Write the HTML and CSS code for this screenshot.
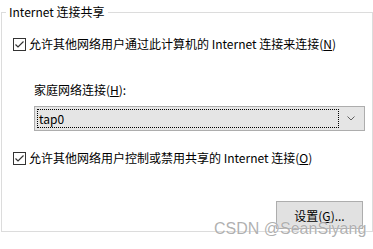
FILE: index.html
```html
<!DOCTYPE html>
<html lang="zh-CN">
<head>
  <meta charset="UTF-8">
  <title>Internet 连接共享</title>
  <link rel="stylesheet" href="styles.css">
</head>
<body>
  <fieldset class="group">
    <legend>Internet 连接共享</legend>

    <label class="check check-first">
      <span class="box">
        <svg width="11" height="11" viewBox="0 0 11 11"><path d="M1.5 5.5 L4 8 L9.5 2.5" fill="none" stroke="#333" stroke-width="1.2"/></svg>
      </span>
      <span>允许其他网络用户通过此计算机的 Internet 连接来连接(<u>N</u>)</span>
    </label>

    <div class="field">
      <div class="field-label">家庭网络连接(<u>H</u>):</div>
      <div class="combo">
        <span class="combo-value">tap0</span>
        <svg class="arrow" width="8" height="5" viewBox="0 0 8 5"><path d="M0.5 0.5 L4 4 L7.5 0.5" fill="none" stroke="#606060" stroke-width="1"/></svg>
      </div>
    </div>

    <label class="check check-second">
      <span class="box">
        <svg width="11" height="11" viewBox="0 0 11 11"><path d="M1.5 5.5 L4 8 L9.5 2.5" fill="none" stroke="#333" stroke-width="1.2"/></svg>
      </span>
      <span>允许其他网络用户控制或禁用共享的 Internet 连接(<u>O</u>)</span>
    </label>

    <div class="actions">
      <button class="btn">设置(<u>G</u>)...</button>
    </div>
  </fieldset>

  <div class="watermark">CSDN @SeanSiyang</div>
</body>
</html>
```

FILE: styles.css
```css
body {
  margin: 0;
  background: #fff;
  font-family: "Noto Sans CJK SC", sans-serif;
  font-size: 12px;
  color: #000;
  position: relative;
  width: 373px;
  height: 249px;
  overflow: hidden;
}
.group {
  margin: 4px 0 1px 1px;
  padding: 0;
  border: 1px solid #dcdcdc;
  height: 226px;
}
.group legend {
  margin-left: 4px;
  padding: 0 3px;
  line-height: 16px;
}
.check {
  display: flex;
  align-items: center;
  margin-left: 11px;
  line-height: 16px;
}
.check-first {
  margin-top: 16px;
}
.check-second {
  margin-top: 19px;
}
.box {
  width: 11px;
  height: 11px;
  border: 1px solid #333;
  margin-right: 3px;
  display: flex;
}
.field {
  margin-left: 32px;
  margin-top: 30px;
  width: 331px;
}
.field-label {
  line-height: 16px;
}
.combo {
  margin-top: 8px;
  height: 23px;
  border: 1px solid #adadad;
  background: #e5e5e5;
  display: flex;
  align-items: center;
  padding: 2px;
  box-sizing: border-box;
  height: 25px;
}
.combo-value {
  flex: 1;
  height: 19px;
  line-height: 17px;
  border: 1px dotted #000;
  box-sizing: border-box;
  padding-left: 1px;
}
.arrow {
  margin: 0 7px 0 8px;
}
.actions {
  display: flex;
  justify-content: flex-end;
  margin-top: 35px;
  padding-right: 9px;
}
.btn {
  width: 87px;
  height: 28px;
  background: #e1e1e1;
  border: 1px solid #adadad;
  font-family: inherit;
  font-size: 12px;
  color: #000;
  padding: 0;
}
.watermark {
  position: absolute;
  left: 214px;
  top: 220px;
  font-family: "Liberation Sans", Arial, sans-serif;
  font-size: 16px;
  color: rgba(150, 150, 150, 0.75);
  text-shadow: 0 0 1px #fff;
}
```
